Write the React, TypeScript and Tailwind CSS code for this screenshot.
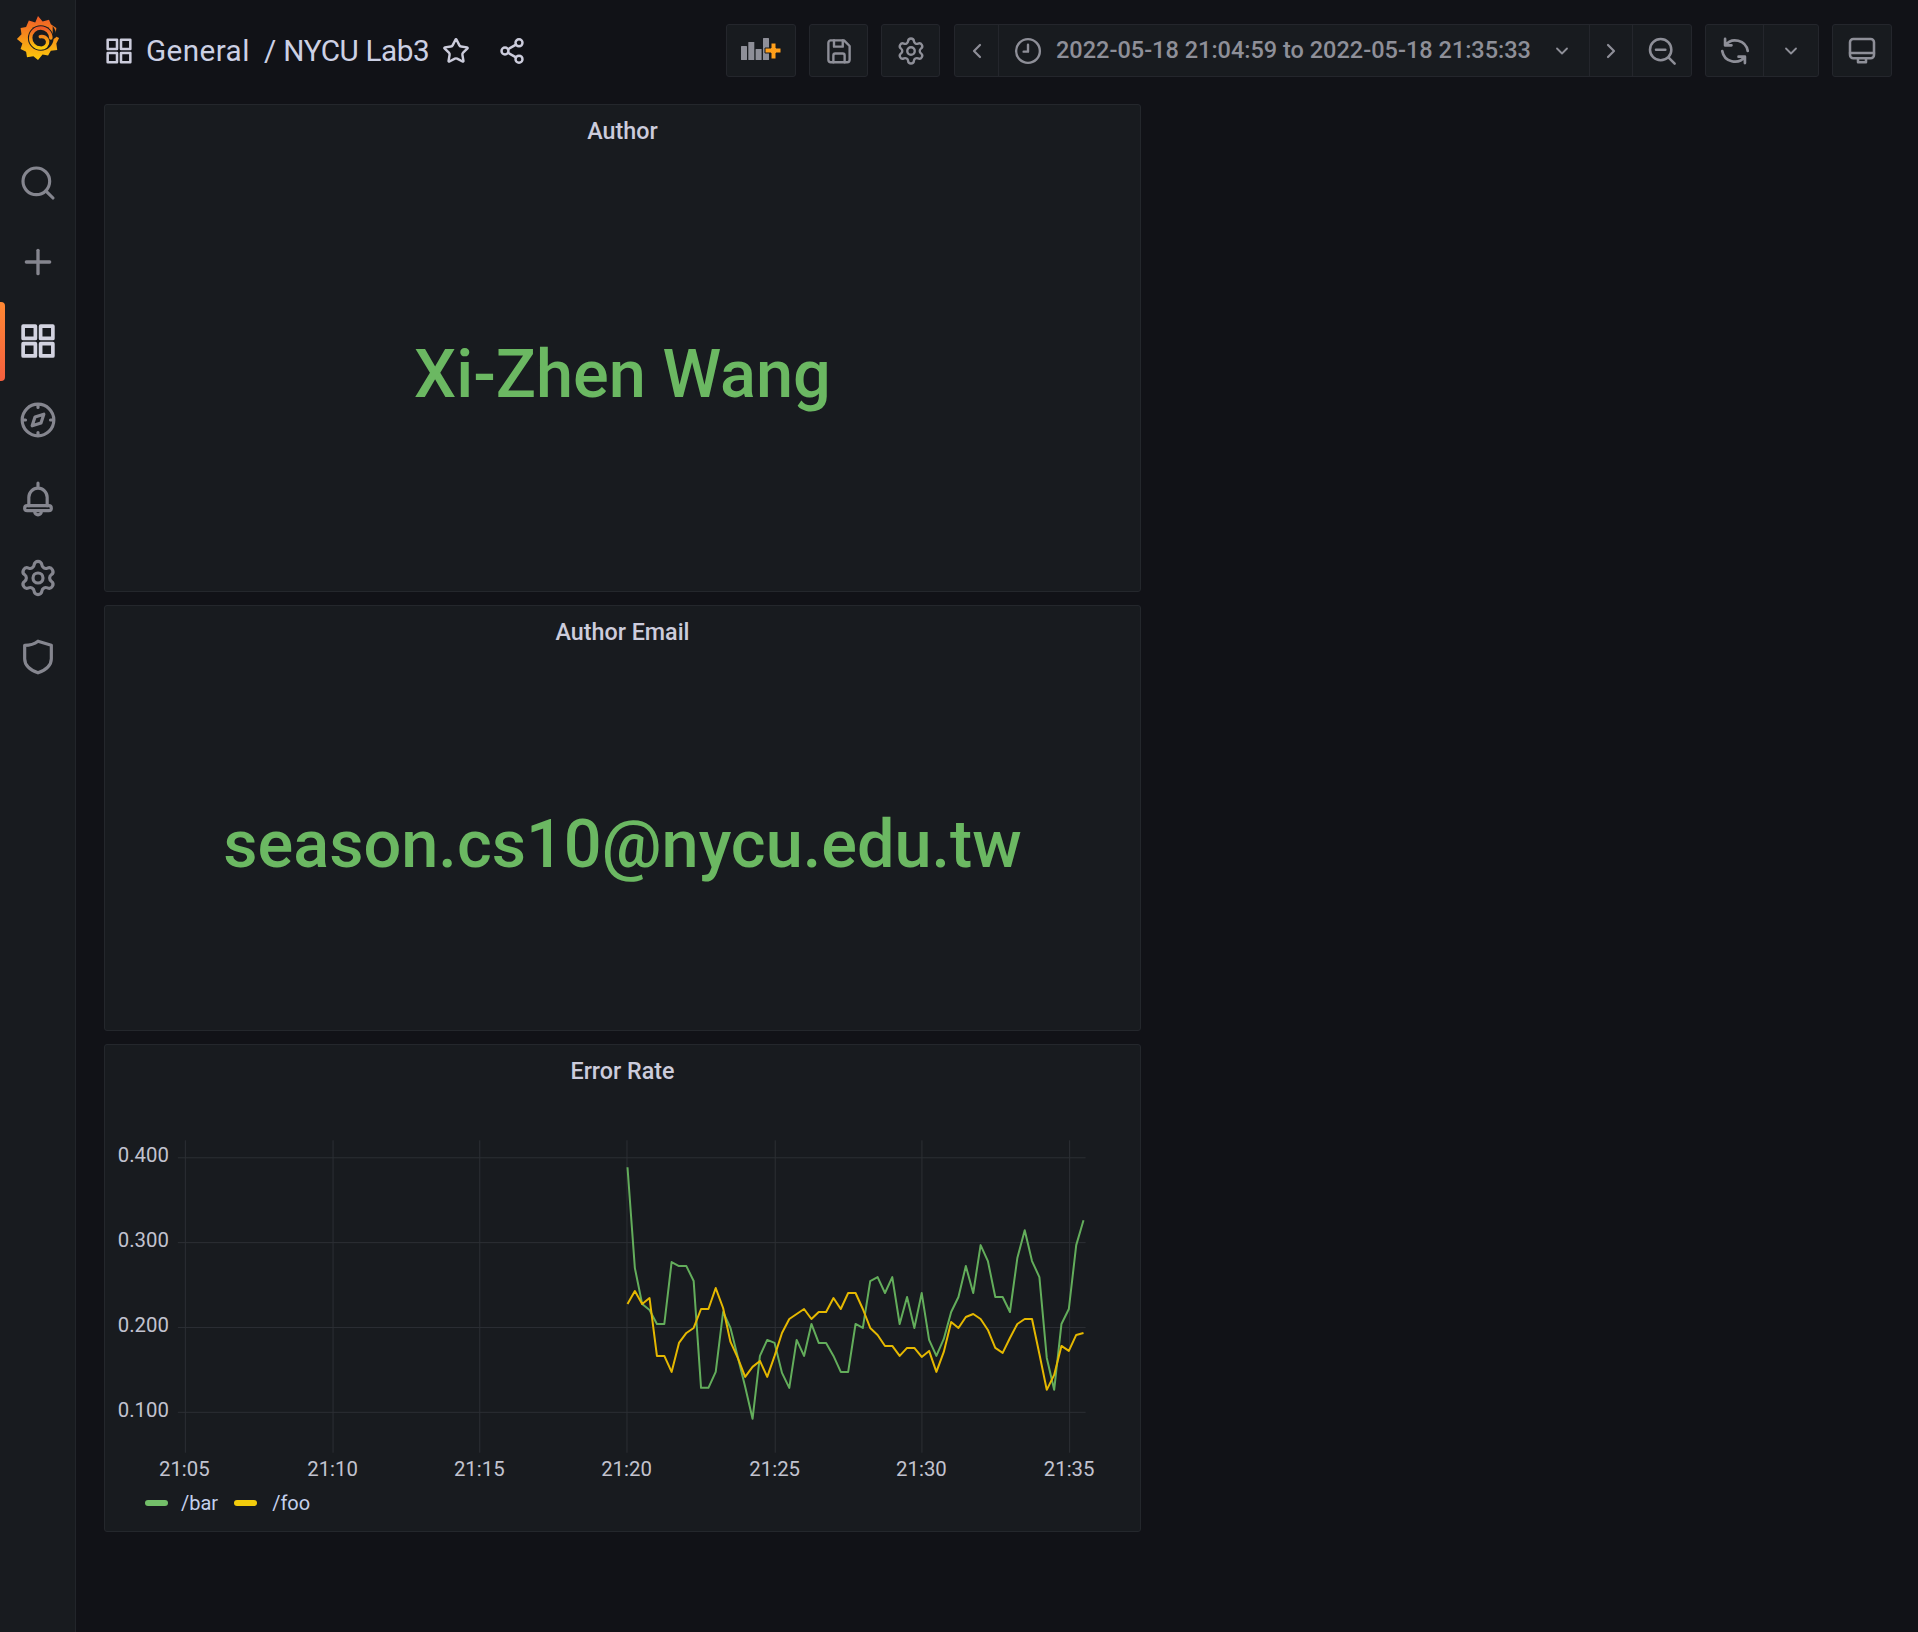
import { ReactNode } from 'react';
import { Star, Share2, Settings, ChevronLeft, ChevronRight, ChevronDown, Plus, Search } from 'lucide-react';

const FONT = "font-['Roboto',sans-serif]";

// chart points are read in page pixels, one sample every 7.37px
const CHART_LEFT = 104;
const CHART_TOP = 1132;
const greenY = [1167, 1268, 1304, 1310, 1324, 1324, 1262, 1266, 1266, 1281, 1388, 1388, 1372, 1312, 1328, 1357, 1387, 1419, 1356, 1340, 1343, 1373, 1388, 1340, 1356, 1324, 1343, 1343, 1356, 1372, 1372, 1324, 1328, 1281, 1277, 1293, 1277, 1324, 1297, 1328, 1293, 1340, 1356, 1339, 1312, 1297, 1266, 1293, 1245, 1261, 1297, 1297, 1312, 1258, 1230, 1261, 1277, 1358, 1390, 1324, 1309, 1245, 1220];
const yellowY = [1304, 1291, 1304, 1298, 1356, 1356, 1372, 1343, 1333, 1328, 1309, 1309, 1288, 1308, 1342, 1358, 1377, 1367, 1361, 1377, 1356, 1333, 1319, 1314, 1309, 1319, 1312, 1312, 1298, 1309, 1293, 1293, 1309, 1328, 1335, 1346, 1346, 1356, 1348, 1348, 1357, 1351, 1372, 1352, 1322, 1328, 1317, 1314, 1319, 1330, 1348, 1353, 1338, 1324, 1319, 1319, 1354, 1390, 1375, 1346, 1351, 1335, 1333];

const toPoints = (ys: number[]) =>
  ys.map((y, i) => `${(627.5 + i * 7.37 - CHART_LEFT).toFixed(1)},${y - CHART_TOP}`).join(' ');

const gridX = [184.5, 332.5, 479.5, 627, 775.5, 922.5, 1070.5];
const timeLabels = [
  { text: '21:05', x: 183.5 },
  { text: '21:10', x: 332 },
  { text: '21:15', x: 479 },
  { text: '21:20', x: 626.5 },
  { text: '21:25', x: 775 },
  { text: '21:30', x: 922 },
  { text: '21:35', x: 1070 },
];
const gridY = [
  { y: 1157.5, label: '0.400', base: 1161.5 },
  { y: 1242.5, label: '0.300', base: 1246.5 },
  { y: 1327.5, label: '0.200', base: 1332.5 },
  { y: 1412.5, label: '0.100', base: 1417.5 },
];

function Icon({ children, className = 'w-10 h-10', width = 1.9 }: { children: ReactNode; className?: string; width?: number }) {
  return (
    <svg viewBox="0 0 24 24" fill="none" stroke="currentColor" strokeWidth={width} strokeLinecap="round" strokeLinejoin="round" className={className}>
      {children}
    </svg>
  );
}

function GrafanaLogo() {
  return (
    <svg viewBox="0 0 48 50" className="w-[44px] h-[48px]">
      <defs>
        <linearGradient id="logoFill" x1="0" y1="0" x2="0" y2="1">
          <stop offset="0" stopColor="#f05a28" />
          <stop offset="1" stopColor="#fbca0a" />
        </linearGradient>
      </defs>
      <path
        fill="url(#logoFill)"
        d="M24 1l5 6 7-2 2 5 6 4-1 9 4 2-3 6 1 7-7 1-3 5-6-1-5 6-5-4-7 1-1-6-6-3 2-6-6-5 5-5-1-7 6-1 3-7 7 2z"
      />
      <circle cx="27" cy="25" r="14" fill="#181b1f" />
      <path d="M40 12a17 17 0 0 1 4 12l-4 3z" fill="#181b1f" />
      <path d="M38 25a11 11 0 1 0-11.500 11c5 .5 8.500-3.500 8-7.500a6.500 6.500 0 0 0-8-5" fill="none" stroke="url(#logoFill)" strokeWidth="3.800" strokeLinecap="round" />
    </svg>
  );
}

function NavItem({ children, active = false }: { children: ReactNode; active?: boolean }) {
  return (
    <div className={`relative h-[79px] flex items-center justify-center ${active ? 'text-[#d2d3e0]' : 'text-[#85868f]'}`}>
      {active && (
        <span className="absolute left-0 top-[1px] h-full w-[5px] rounded-r-sm bg-gradient-to-b from-[#ff8833] to-[#f55f3e]" />
      )}
      {children}
    </div>
  );
}

function ToolButton({ children, width }: { children: ReactNode; width: string }) {
  return (
    <div className={`${width} h-[53px] flex items-center justify-center rounded-[3px] border border-[#24262c] bg-[#181b1f] text-[#8e8f98]`}>
      {children}
    </div>
  );
}

function Panel({ title, height, children }: { title: string; height: string; children: ReactNode }) {
  return (
    <section className={`${height} flex flex-col rounded-[3px] border border-[#24272c] bg-[#181b1f]`}>
      <h2 className="h-[47px] shrink-0 pt-[11px] text-center text-[23.3px] leading-[30px] font-medium text-[#ccccdc]">{title}</h2>
      {children}
    </section>
  );
}

function ErrorRateChart() {
  return (
    <svg viewBox="0 0 1037 360" className="w-[1035px] h-[360px]">
      {gridX.map((x) => (
        <line key={x} x1={x - CHART_LEFT} x2={x - CHART_LEFT} y1={8} y2={321} stroke="#2c2f34" strokeWidth="1" />
      ))}
      {gridY.map(({ y }) => (
        <line key={y} x1={73} x2={982.5} y1={y - CHART_TOP} y2={y - CHART_TOP} stroke="#2c2f34" strokeWidth="1" />
      ))}
      {gridY.map(({ label, base }) => (
        <text key={label} x={64} y={base - CHART_TOP} textAnchor="end" fontSize="20.4" fill="#c2c3cf" fontFamily="Roboto, sans-serif">
          {label}
        </text>
      ))}
      {timeLabels.map(({ text, x }) => (
        <text key={text} x={x - CHART_LEFT} y={344} textAnchor="middle" fontSize="20.4" fill="#c2c3cf" fontFamily="Roboto, sans-serif">
          {text}
        </text>
      ))}
      <polyline points={toPoints(greenY)} fill="none" stroke="#63ad5b" strokeWidth="2" strokeLinejoin="round" />
      <polyline points={toPoints(yellowY)} fill="none" stroke="#e5b800" strokeWidth="2" strokeLinejoin="round" />
    </svg>
  );
}

export default function App() {
  return (
    <div className={`${FONT} flex min-h-[1632px] bg-[#111217] text-[#ccccdc]`}>
      <aside className="w-[76px] shrink-0 border-r border-[#22252a] bg-[#181b1f]">
        <div className="h-[76px] flex items-center justify-center">
          <GrafanaLogo />
        </div>
        <nav className="pt-[67px]">
          <NavItem><Search className="w-[40px] h-[40px]" strokeWidth={1.9} /></NavItem>
          <NavItem><Plus className="w-[40px] h-[40px]" strokeWidth={2} /></NavItem>
          <NavItem active>
            <Icon className="w-[42px] h-[42px]" width={2.1}>
              <rect x="3.500" y="3.500" width="7" height="7" />
              <rect x="13.500" y="3.500" width="7" height="7" />
              <rect x="3.500" y="13.500" width="7" height="7" />
              <rect x="13.500" y="13.500" width="7" height="7" />
            </Icon>
          </NavItem>
          <NavItem>
            <Icon>
              <circle cx="12" cy="12" r="9.500" />
              <path d="M15.500 8.500 13.800 13.800 8.500 15.500 10.200 10.200z" />
              <path d="M12 3v1.500M12 19.500V21M3 12h1.500M19.500 12H21" />
            </Icon>
          </NavItem>
          <NavItem>
            <Icon>
              <path d="M12 2.500v2M6.500 16v-5a5.500 5.500 0 0 1 11 0v5" />
              <path d="M5.500 16h13a1.500 1.500 0 0 1 0 3h-13a1.500 1.500 0 0 1 0-3z" />
              <path d="M10 19.500a2 2 0 0 0 4 0" />
            </Icon>
          </NavItem>
          <NavItem><Settings className="w-[40px] h-[40px]" strokeWidth={1.9} /></NavItem>
          <NavItem>
            <Icon>
              <path d="M12 2.500 20 5v8c0 4-3.500 6.800-8 8.500-4.500-1.700-8-4.500-8-8.500V5c3.200 0 5.800-.8 8-2.500z" />
            </Icon>
          </NavItem>
        </nav>
      </aside>

      <main className="flex-1 min-w-0 pl-[28px] pr-[26px]">
        <header className="h-[104px] pt-[24px] flex items-start">
          <div className="h-[53px] flex items-center gap-[11px]">
            <Icon className="w-8 h-8 text-[#ccccdc] -ml-[1px]">
              <rect x="3.500" y="3.500" width="7" height="7" />
              <rect x="13.500" y="3.500" width="7" height="7" />
              <rect x="3.500" y="13.500" width="7" height="7" />
              <rect x="13.500" y="13.500" width="7" height="7" />
            </Icon>
            <h1 className="text-[29.7px] leading-none font-normal tracking-[-0.2px] text-[#ccd0e4] whitespace-pre">
              <span className="tracking-[0.4px]">General</span>{'  / '}<span className="tracking-[-0.4px]">NYCU Lab3</span>
            </h1>
            <Star className="w-7 h-7 ml-[2px]" strokeWidth={2.1} />
            <Share2 className="w-7 h-7 ml-[17px]" strokeWidth={2.1} />
          </div>

          <div className="ml-auto flex gap-[13px]">
            <ToolButton width="w-[70px]">
              <svg viewBox="0 0 41 25" className="w-[41px] h-[25px]">
                <rect x="0" y="8" width="6" height="14" rx="0.500" fill="#8e8f98" />
                <rect x="7.300" y="4" width="6" height="18" rx="0.500" fill="#8e8f98" />
                <rect x="14.600" y="11" width="6" height="11" rx="0.500" fill="#8e8f98" />
                <rect x="22" y="0" width="6" height="22" rx="0.500" fill="#8e8f98" />
                <path d="M30 8h5v5h5v5h-5v6h-5v-6h-6v-5h6z" fill="#ff9f1a" stroke="#181b1f" strokeWidth="1" transform="translate(0 -3)" />
              </svg>
            </ToolButton>
            <ToolButton width="w-[59px]">
              <Icon className="w-[30px] h-[30px]">
                <path d="M5 3.500h11l4.500 4.500v11a2 2 0 0 1-2 2h-13a2 2 0 0 1-2-2v-13.500a2 2 0 0 1 2-2z" />
                <path d="M8 3.500v5h7v-5M7.500 21v-5.500a1.500 1.500 0 0 1 1.500-1.500h6a1.500 1.500 0 0 1 1.500 1.500V21" />
              </Icon>
            </ToolButton>
            <ToolButton width="w-[59px]"><Settings className="w-[30px] h-[30px]" strokeWidth={1.9} /></ToolButton>

            <div className="ml-[1px] h-[53px] w-[738px] flex rounded-[3px] border border-[#24262c] bg-[#181b1f] text-[#8e8f98]">
              <div className="w-[44px] flex items-center justify-center border-r border-[#24262c]">
                <ChevronLeft className="w-[24px] h-[24px]" strokeWidth={2.2} />
              </div>
              <div className="flex-1 flex items-center pl-[14px] pr-[17px] gap-[13px] text-[23.5px] font-medium whitespace-nowrap">
                <Icon className="w-[30px] h-[30px]">
                  <circle cx="12" cy="12" r="9.500" />
                  <path d="M12 7v5.500H8.500" />
                </Icon>
                <span>2022-05-18 21:04:59 to 2022-05-18 21:35:33</span>
                <ChevronDown className="w-[20px] h-[20px] ml-auto" strokeWidth={2.2} />
              </div>
              <div className="w-[44px] flex items-center justify-center border-x border-[#24262c]">
                <ChevronRight className="w-[24px] h-[24px]" strokeWidth={2.2} />
              </div>
              <div className="w-[58px] flex items-center justify-center">
                <Icon className="w-[32px] h-[32px]">
                  <circle cx="11" cy="11" r="8" />
                  <path d="M7.500 11h7M17 17l4.500 4.500" />
                </Icon>
              </div>
            </div>

            <div className="h-[53px] w-[114px] flex rounded-[3px] border border-[#24262c] bg-[#181b1f] text-[#8e8f98]">
              <div className="w-[58px] flex items-center justify-center border-r border-[#24262c]">
                <Icon className="w-[34px] h-[34px]">
                  <path d="M5 3.500V8h4.500M5 8A9 9 0 0 1 21 12" />
                  <path d="M19 20.500V16h-4.500M19 16A9 9 0 0 1 3 12" />
                </Icon>
              </div>
              <div className="flex-1 flex items-center justify-center">
                <ChevronDown className="w-[20px] h-[20px]" strokeWidth={2.2} />
              </div>
            </div>

            <ToolButton width="w-[60px]">
              <Icon className="w-[32px] h-[32px]">
                <rect x="3" y="3" width="18" height="14.500" rx="2.500" />
                <path d="M3 13.500h18M9 17.500v3h6v-3" />
              </Icon>
            </ToolButton>
          </div>
        </header>

        <div className="w-[1037px] flex flex-col gap-[13px]">
          <Panel title="Author" height="h-[488px]">
            <div className="flex-1 flex items-center justify-center pt-[4px] text-[66.67px] font-medium text-[#6bb862]">Xi-Zhen Wang</div>
          </Panel>
          <Panel title="Author Email" height="h-[426px]">
            <div className="flex-1 flex items-center justify-center pt-[4px] text-[66.67px] font-medium text-[#6bb862]">season.cs10@nycu.edu.tw</div>
          </Panel>
          <Panel title="Error Rate" height="h-[488px]">
            <div className="flex-1 flex flex-col">
              <div className="mt-[40px]"><ErrorRateChart /></div>
              <div className="flex items-center pl-[40px] -mt-[3px] text-[20px] leading-[28px] text-[#c4d0ec]">
                <span className="w-[23px] h-[6px] rounded-sm bg-[#73bf69]" />
                <span className="ml-[13px]">/bar</span>
                <span className="ml-[16px] w-[23px] h-[6px] rounded-sm bg-[#f2cc0c]" />
                <span className="ml-[15px]">/foo</span>
              </div>
            </div>
          </Panel>
        </div>
      </main>
    </div>
  );
}
